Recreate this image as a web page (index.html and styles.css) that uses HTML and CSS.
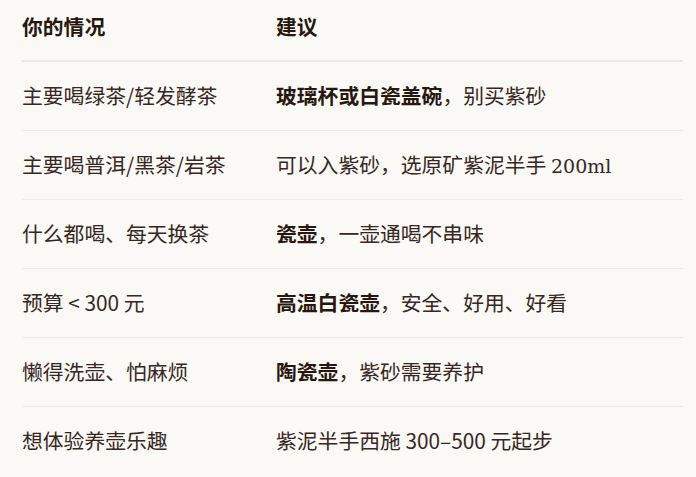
FILE: index.html
```html
<!DOCTYPE html>
<html lang="zh-CN">
<head>
<meta charset="utf-8">
<title>选壶建议</title>
<link rel="stylesheet" href="styles.css">
</head>
<body>
<table class="guide">
  <thead>
    <tr><th class="c1">你的情况</th><th>建议</th></tr>
  </thead>
  <tbody>
    <tr><td class="c1">主要喝绿茶/轻发酵茶</td><td><strong>玻璃杯或白瓷盖碗</strong>，别买紫砂</td></tr>
    <tr><td class="c1">主要喝普洱/黑茶/岩茶</td><td>可以入紫砂，选原矿紫泥半手 <span class="serif">200ml</span></td></tr>
    <tr><td class="c1">什么都喝、每天换茶</td><td><strong>瓷壶</strong>，一壶通喝不串味</td></tr>
    <tr><td class="c1">预算 &lt; 300 元</td><td><strong>高温白瓷壶</strong>，安全、好用、好看</td></tr>
    <tr><td class="c1">懒得洗壶、怕麻烦</td><td><strong>陶瓷壶</strong>，紫砂需要养护</td></tr>
    <tr class="last"><td class="c1">想体验养壶乐趣</td><td>紫泥半手西施 300–500 元起步</td></tr>
  </tbody>
</table>
</body>
</html>
```
FILE: styles.css
```css
html, body {
  margin: 0;
  padding: 0;
  background: #faf9f6;
}
body {
  padding: 0 13px 0 22px;
  font-family: "Noto Sans CJK SC", "Noto Sans", sans-serif;
  font-size: 20.8px;
  color: #37271f;
}
.guide {
  width: 661px;
  border-collapse: collapse;
  table-layout: fixed;
}
.guide th, .guide td {
  text-align: left;
  padding: 17px 0 18px;
  line-height: 33px;
  white-space: nowrap;
}
.guide th {
  padding-top: 9px;
  padding-bottom: 17px;
  line-height: 34px;
  font-weight: 700;
  color: #28170f;
  border-bottom: 2px solid #eceae5;
}
.guide td {
  border-bottom: 1px solid #eceae6;
}
.guide tr.last td {
  border-bottom: none;
}
.guide .c1 {
  width: 254px;
}
.guide strong {
  font-weight: 700;
  color: #28170f;
}
.serif {
  font-family: "DejaVu Serif", serif;
  font-size: 19px;
  line-height: 1;
}
```
